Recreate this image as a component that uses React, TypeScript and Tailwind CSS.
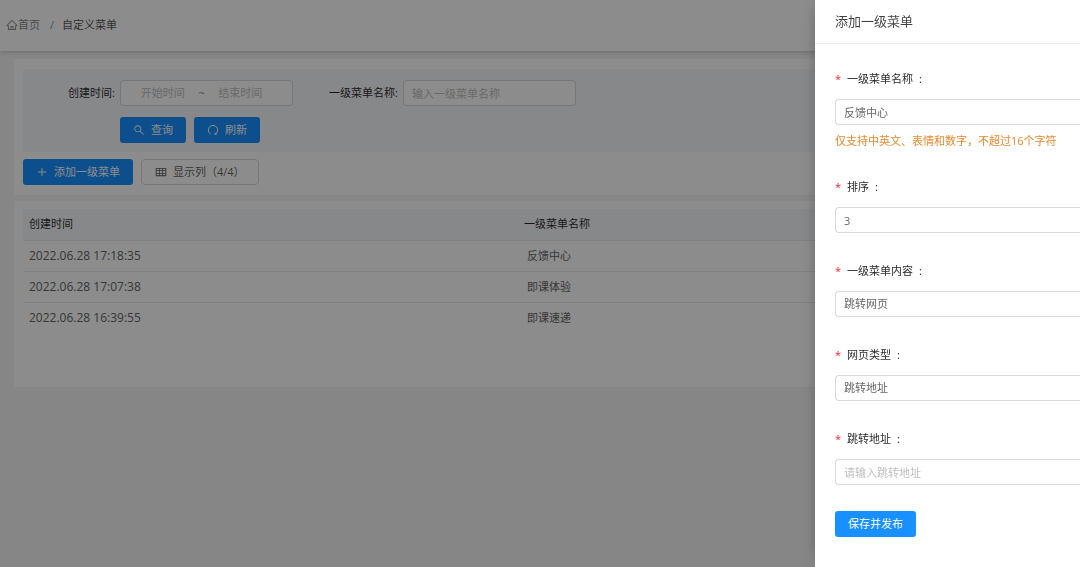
import { useState } from "react";
import type { ReactNode } from "react";
import {
  AiOutlineHome,
  AiOutlinePlus,
  AiOutlineSearch,
  AiOutlineTable,
} from "react-icons/ai";

const rows = [
  { time: "2022.06.28 17:18:35", name: "反馈中心" },
  { time: "2022.06.28 17:07:38", name: "即课体验" },
  { time: "2022.06.28 16:39:55", name: "即课速递" },
];

const fieldClass =
  "h-[26px] w-full appearance-none rounded-l-sm border border-r-0 border-[#d9d9d9] bg-white px-2 text-[#666] outline-none placeholder:text-[#bfbfbf]";

function RefreshIcon() {
  return (
    <svg
      viewBox="0 0 12 12"
      className="size-3"
      fill="none"
      stroke="currentColor"
      strokeWidth="1"
      aria-hidden="true"
    >
      <path d="M3.7 10.2A4.7 4.7 0 1 1 8.3 10.2M8 8.6v1.8h1.8" />
    </svg>
  );
}

function PrimaryButton({
  icon,
  children,
}: {
  icon?: ReactNode;
  children: ReactNode;
}) {
  return (
    <button
      type="button"
      className="flex h-[26px] items-center gap-[6px] rounded-[3px] bg-[#1890ff] px-[13px] text-white"
    >
      {icon}
      {children}
    </button>
  );
}

function SearchPanel() {
  return (
    <form className="flex bg-[#f5f7fa] pt-[11px] pb-[9px] pl-10">
      <div>
        <div className="flex items-center gap-[5px]">
          <label htmlFor="start" className="w-[52px] text-right text-black/85">
            创建时间:
          </label>
          <div className="flex h-[26px] w-[173px] items-center rounded-sm border border-[#d9d9d9] bg-white pr-4 pl-[6px]">
            <input
              id="start"
              placeholder="开始时间"
              className="w-0 flex-1 text-center outline-none placeholder:text-[#bfbfbf]"
            />
            <span className="text-black/50">~</span>
            <input
              aria-label="结束时间"
              placeholder="结束时间"
              className="w-0 flex-1 text-center outline-none placeholder:text-[#bfbfbf]"
            />
          </div>
        </div>
        <div className="mt-[11px] ml-[57px] flex gap-2">
          <PrimaryButton icon={<AiOutlineSearch className="size-3" />}>
            查询
          </PrimaryButton>
          <PrimaryButton icon={<RefreshIcon />}>刷新</PrimaryButton>
        </div>
      </div>
      <div className="ml-[30px] flex h-[26px] items-center gap-[5px]">
        <label htmlFor="menu-name" className="w-[75px] text-right text-black/85">
          一级菜单名称:
        </label>
        <input
          id="menu-name"
          placeholder="输入一级菜单名称"
          className="h-[26px] w-[173px] rounded-sm border border-[#d9d9d9] bg-white px-2 outline-none placeholder:text-[#bfbfbf]"
        />
      </div>
    </form>
  );
}

function MenuTable() {
  return (
    <table className="w-full table-fixed border-collapse text-left">
      <thead className="bg-[#f5f7fa] text-black/85">
        <tr className="h-[31px] border-b border-[#e8eaec]">
          <th className="w-[495px] px-[6px] font-normal">创建时间</th>
          <th className="px-[6px] font-normal">一级菜单名称</th>
        </tr>
      </thead>
      <tbody className="text-[#666]">
        {rows.map((row) => (
          <tr
            key={row.time}
            className="h-[31px] border-b border-[#e8eaec] last:border-b-0"
          >
            <td className="px-[6px] text-xs">{row.time}</td>
            <td className="px-[9px]">{row.name}</td>
          </tr>
        ))}
      </tbody>
    </table>
  );
}

function Field({
  id,
  label,
  children,
}: {
  id: string;
  label: string;
  children: ReactNode;
}) {
  return (
    <div>
      <label
        htmlFor={id}
        className="mb-3 flex h-4 items-center text-black/85"
      >
        <span className="w-3 text-[#f5222d]">*</span>
        {label}
        <span className="ml-[6px]">:</span>
      </label>
      {children}
    </div>
  );
}

function Drawer() {
  const [name, setName] = useState("反馈中心");
  const [order, setOrder] = useState("3");

  return (
    <aside className="fixed inset-y-0 right-0 w-[265px] overflow-hidden bg-white shadow-[-6px_0_16px_-8px_rgba(0,0,0,0.3)]">
      <h2 className="flex h-11 items-center border-b border-[#e8e8e8] pb-[2px] pl-5 text-[13px] text-black/75">
        添加一级菜单
      </h2>
      <form className="flex flex-col gap-[30px] pt-[27px] pl-5">
        <Field id="name" label="一级菜单名称">
          <input
            id="name"
            value={name}
            onChange={(e) => setName(e.target.value)}
            className={fieldClass}
          />
          <p className="mt-2 leading-4 whitespace-nowrap text-[#e6892e]">
            仅支持中英文、表情和数字，不超过16个字符
          </p>
        </Field>
        <Field id="order" label="排序">
          <input
            id="order"
            value={order}
            onChange={(e) => setOrder(e.target.value)}
            className={fieldClass}
          />
        </Field>
        <Field id="content" label="一级菜单内容">
          <select id="content" className={fieldClass}>
            <option>跳转网页</option>
          </select>
        </Field>
        <Field id="page-type" label="网页类型">
          <select id="page-type" className={fieldClass}>
            <option>跳转地址</option>
          </select>
        </Field>
        <Field id="url" label="跳转地址">
          <input
            id="url"
            placeholder="请输入跳转地址"
            className={fieldClass}
          />
          <div className="mt-[26px] flex">
            <PrimaryButton>保存并发布</PrimaryButton>
          </div>
        </Field>
      </form>
    </aside>
  );
}

export default function App() {
  return (
    <div className="min-h-screen bg-[#f5f5f5] font-['Open_Sans','Noto_Sans_CJK_SC',sans-serif] text-[11px] leading-4">
      <header className="flex h-[51px] items-center bg-white pb-[2px] pl-[6px] shadow-[0_1px_5px_rgba(0,0,0,0.2)]">
        <nav className="flex items-center">
          <a href="#" className="flex items-center text-black/50">
            <AiOutlineHome className="size-3" />
            首页
          </a>
          <span className="mr-2 ml-[10px] text-black/50">/</span>
          <span className="text-black/70">自定义菜单</span>
        </nav>
      </header>

      <main className="flex flex-col gap-[6px] py-2 pl-[14px]">
        <section className="bg-white pt-[10px] pb-[10px] pl-[9px]">
          <SearchPanel />
          <div className="mt-[7px] flex gap-2">
            <PrimaryButton icon={<AiOutlinePlus className="size-3" />}>
              添加一级菜单
            </PrimaryButton>
            <button
              type="button"
              className="flex h-[26px] items-center gap-[6px] rounded-sm border border-[#d9d9d9] bg-white px-[13px] text-black/65"
            >
              <AiOutlineTable className="size-3" />
              显示列（4/4）
            </button>
          </div>
        </section>
        <section className="min-h-[186px] bg-white pt-2 pl-[9px]">
          <MenuTable />
        </section>
      </main>

      <div className="fixed inset-0 bg-black/45" />
      <Drawer />
    </div>
  );
}
